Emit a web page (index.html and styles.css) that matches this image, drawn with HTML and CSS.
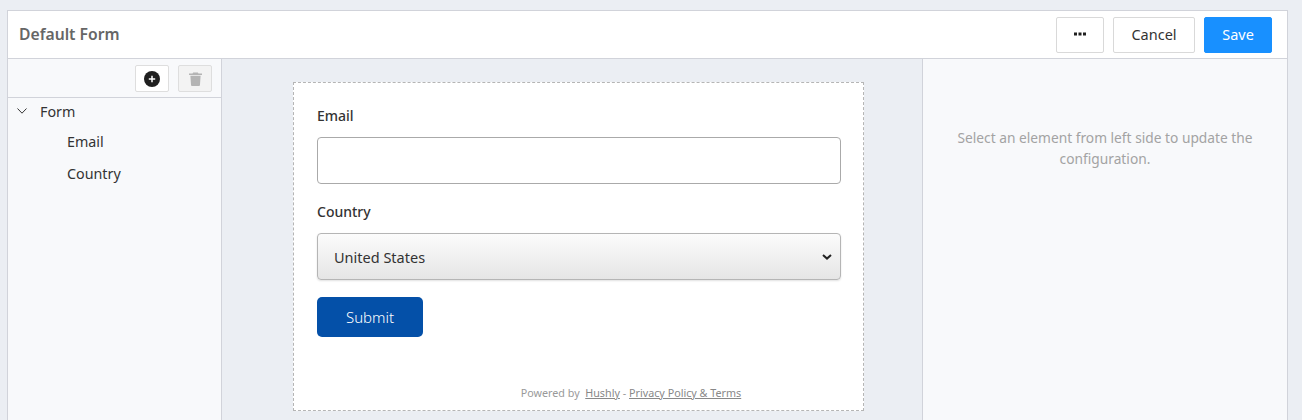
FILE: index.html
```html
<!DOCTYPE html>
<html lang="en">
<head>
<meta charset="utf-8">
<title>Default Form</title>
<link rel="stylesheet" href="styles.css">
</head>
<body>
<div class="panel">
  <header class="topbar">
    <h1 class="title">Default Form</h1>
    <div class="actions">
      <button class="btn btn-more" type="button" aria-label="More">
        <svg width="12" height="4" viewBox="0 0 12 4"><rect x="0" y="0.500" width="3" height="3" fill="#1f1f1f"/><rect x="4.500" y="0.500" width="3" height="3" fill="#1f1f1f"/><rect x="9" y="0.500" width="3" height="3" fill="#1f1f1f"/></svg>
      </button>
      <button class="btn btn-cancel" type="button">Cancel</button>
      <button class="btn btn-save" type="button">Save</button>
    </div>
  </header>
  <div class="workspace">
    <aside class="sidebar">
      <div class="toolbar">
        <button class="tool" type="button" aria-label="Add">
          <svg width="16" height="16" viewBox="0 0 16 16"><circle cx="8" cy="8" r="8" fill="#1f1f1f"/><path d="M8 4.800v6.400M4.800 8h6.400" stroke="#fff" stroke-width="1.500"/></svg>
        </button>
        <button class="tool tool-disabled" type="button" aria-label="Delete">
          <svg width="13" height="14" viewBox="0 0 14 15"><path d="M4.500 0.500h5l.7 1H14v1.600H0V1.500h3.800z" fill="#b4b4b4"/><path d="M1.500 4h11l-.7 10a1 1 0 0 1-1 1H3.200a1 1 0 0 1-1-1z" fill="#b4b4b4"/></svg>
        </button>
      </div>
      <ul class="tree">
        <li class="tree-root">
          <svg class="caret" width="10" height="6" viewBox="0 0 10 6"><path d="M.5.5 5 5.200 9.500.5" fill="none" stroke="#333" stroke-width="1"/></svg>
          <span>Form</span>
        </li>
        <li class="tree-leaf">Email</li>
        <li class="tree-leaf">Country</li>
      </ul>
    </aside>
    <main class="canvas">
      <form class="card">
        <label class="label">Email</label>
        <input class="input" type="text">
        <label class="label">Country</label>
        <div class="select">
          <span>United States</span>
          <svg width="10" height="6" viewBox="0 0 10 6"><path d="M1 1l4 3.600L9 1" fill="none" stroke="#222" stroke-width="2"/></svg>
        </div>
        <button class="submit" type="button">Submit</button>
        <p class="legal">Powered by &nbsp;<a href="#">Hushly</a> - <a href="#">Privacy Policy &amp; Terms</a></p>
      </form>
    </main>
    <aside class="config">
      <p class="hint">Select an element from left side to update the configuration.</p>
    </aside>
  </div>
</div>
</body>
</html>
```
FILE: styles.css
```css
* { box-sizing: border-box; }
html, body { height: 420px; }
body {
  margin: 0;
  padding: 10px 14px 0 7px;
  overflow: hidden;
  background: #ebeef3;
  font-family: "Noto Sans", "Open Sans", sans-serif;
  color: #333;
}
.panel {
  height: 420px;
  border: 1px solid #d1d3da;
  background: #fff;
  display: flex;
  flex-direction: column;
}
.topbar {
  height: 48px;
  flex: none;
  padding: 0 15px 0 11px;
  border-bottom: 1px solid #d1d3da;
  display: flex;
  align-items: center;
  justify-content: space-between;
}
.title {
  margin: 0 0 2px;
  font-size: 15.700px;
  font-weight: 600;
  color: #666;
}
.actions { display: flex; gap: 9px; }
.btn {
  height: 36px;
  border: 1px solid #d9d9d9;
  border-radius: 2px;
  background: #fff;
  color: #333;
  font: inherit;
  font-size: 14.500px;
  padding: 0 0 2px;
}
.btn-more { width: 48px; display: flex; align-items: center; justify-content: center; }
.btn-cancel { width: 82px; }
.btn-save { width: 68px; background: #1890ff; border-color: #1890ff; color: #fff; }
.workspace { flex: 1; display: flex; min-height: 0; }
.sidebar {
  width: 214px;
  flex: none;
  background: #f8f9fb;
  border-right: 1px solid #d1d3da;
}
.toolbar {
  height: 39px;
  border-bottom: 1px solid #d1d3da;
  padding: 6px 9px 0 0;
  display: flex;
  justify-content: flex-end;
  gap: 9px;
}
.tool {
  width: 34px;
  height: 27px;
  padding: 0;
  border: 1px solid #dedede;
  border-radius: 2px;
  background: #fff;
  display: flex;
  align-items: center;
  justify-content: center;
}
.tool-disabled { background: #f3f3f3; }
.tree { list-style: none; margin: 0; padding: 0; font-size: 14.300px; color: #333; }
.tree-root {
  height: 28px;
  padding: 0 0 2px 9px;
  display: flex;
  align-items: center;
  gap: 13px;
}
.tree-leaf { height: 32px; line-height: 32px; padding-left: 59px; }
.canvas {
  width: 700px;
  flex: none;
  background: #ebeef3;
  padding: 23px 0 0 71px;
}
.card {
  width: 571px;
  height: 329px;
  position: relative;
  border: 1px dashed #b5b5b5;
  background: #fff;
  padding: 22px 22px 0 23px;
  display: flex;
  flex-direction: column;
  align-items: flex-start;
}
.label { font-size: 14px; font-weight: 500; line-height: 22px; color: #333; margin-bottom: 10px; }
.input {
  width: 524px;
  height: 47px;
  border: 1px solid #aaa;
  border-radius: 4px;
  margin-bottom: 17px;
  background: #fff;
}
.select {
  width: 524px;
  height: 47px;
  border: 1px solid #b5b5b5;
  border-radius: 4px;
  padding: 0 8px 0 16px;
  margin-bottom: 17px;
  display: flex;
  align-items: center;
  justify-content: space-between;
  font-size: 14.500px;
  color: #333;
  background: linear-gradient(#fcfcfc, #e5e5e5);
  box-shadow: 0 1px 2px rgba(0, 0, 0, 0.12);
}
.submit {
  width: 106px;
  height: 40px;
  border: 0;
  border-radius: 5px;
  padding: 0;
  background: #0450a8;
  color: #fff;
  font: inherit;
  font-size: 15px;
  font-weight: 300;
}
.legal {
  position: absolute;
  left: 0;
  right: 0;
  bottom: 9px;
  margin: 0;
  padding-left: 105px;
  text-align: center;
  font-size: 10.750px;
  line-height: 16px;
  color: #999;
}
.legal a { color: #888; }
.config {
  flex: 1;
  background: #f8f9fb;
  border-left: 1px solid #d1d3da;
  padding: 68px 20px 0;
}
.hint {
  margin: 0;
  text-align: center;
  font-size: 13.750px;
  line-height: 21px;
  color: #a3a3a3;
}
```
